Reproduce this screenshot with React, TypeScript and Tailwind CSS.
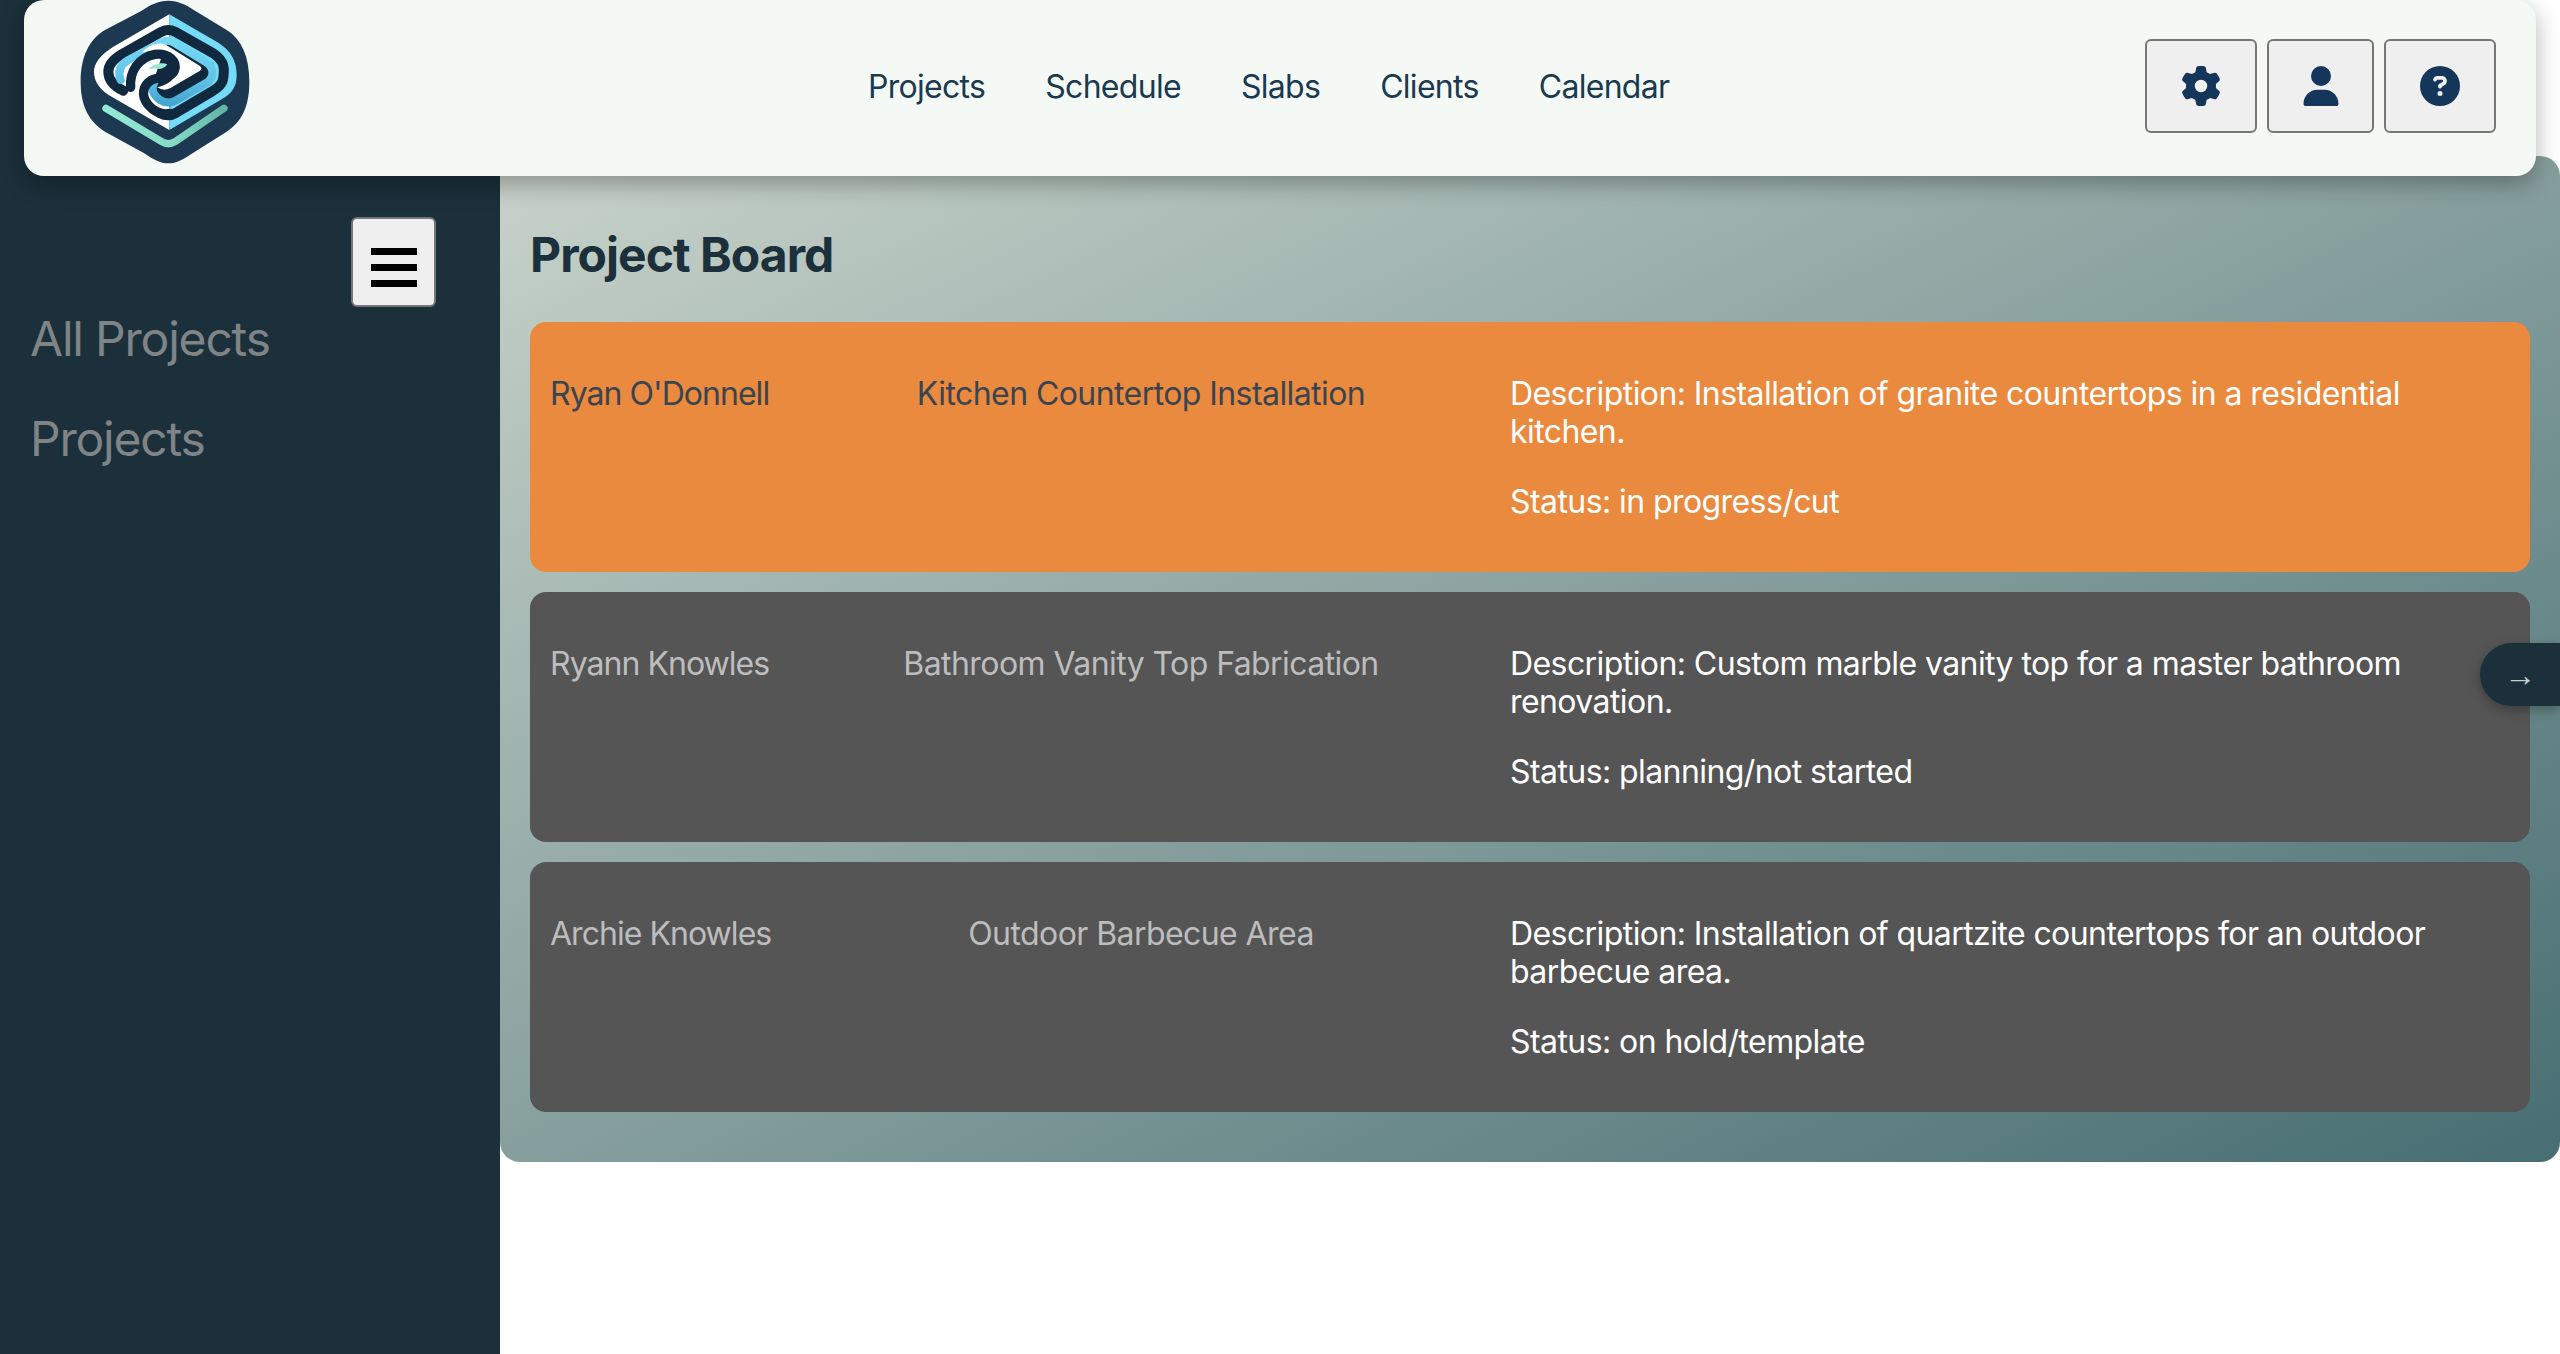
import { FaGear, FaUser, FaCircleQuestion } from 'react-icons/fa6'

const navLinks = ['Projects', 'Schedule', 'Slabs', 'Clients', 'Calendar']

const projects = [
  {
    client: "Ryan O'Donnell",
    title: 'Kitchen Countertop Installation',
    description: 'Description: Installation of granite countertops in a residential kitchen.',
    status: 'Status: in progress/cut',
    active: true,
  },
  {
    client: 'Ryann Knowles',
    title: 'Bathroom Vanity Top Fabrication',
    description: 'Description: Custom marble vanity top for a master bathroom renovation.',
    status: 'Status: planning/not started',
    active: false,
  },
  {
    client: 'Archie Knowles',
    title: 'Outdoor Barbecue Area',
    description: 'Description: Installation of quartzite countertops for an outdoor barbecue area.',
    status: 'Status: on hold/template',
    active: false,
  },
]

function Logo() {
  return (
    <svg viewBox="0 0 510 495" className="w-[170px] h-[165px]">
      <defs>
        <linearGradient id="mint" x1="0" y1="0" x2="1" y2="0">
          <stop offset="0" stopColor="#93e9d3" />
          <stop offset="0.55" stopColor="#86dcc8" />
          <stop offset="1" stopColor="#62b5a5" />
        </linearGradient>
        <linearGradient id="swirl" x1="0" y1="0" x2="0" y2="1">
          <stop offset="0" stopColor="#74d8f4" />
          <stop offset="0.6" stopColor="#62c4e8" />
          <stop offset="1" stopColor="#46a6d2" />
        </linearGradient>
      </defs>
      <path d="M265 2C295 2 320 15 345 32L440 90C485 118 508 170 508 245C508 320 485 365 440 395L340 458C310 478 290 490 265 490C240 490 220 478 190 458L75 395C28 365 2 320 2 245C2 170 28 118 75 90L185 32C210 15 235 2 265 2Z" fill="#1d3851" />
      <path d="M268 43L100 140C60 165 42 190 42 215C42 245 60 270 95 290L268 390Z" fill="#fff" />
      <path d="M268 43L415 128C450 150 470 180 470 225C470 262 455 280 425 298L268 390Z" fill="#74dcf6" />
      <path d="M130 272C95 255 85 235 85 215C85 195 100 178 125 163L245 95Q265 85 285 95L400 160C430 180 435 200 430 232C428 255 410 265 395 275L285 340Q265 352 240 340" fill="none" stroke="#10293f" strokeWidth="30" strokeLinecap="round" strokeLinejoin="round" />
      <path d="M265 110L400 190L400 240L270 320L225 290L225 230Z" fill="#10293f" />
      <path d="M122 240C112 215 120 195 145 180L245 127Q262 118 280 127L375 185C400 200 405 225 385 245L290 300Q265 315 240 300C220 285 212 270 222 250" fill="none" stroke="url(#swirl)" strokeWidth="24" strokeLinecap="round" strokeLinejoin="round" />
      <path d="M185 158C205 135 235 125 255 133L360 198Q368 205 360 212L270 265Q250 275 232 262C255 258 290 240 295 205C295 175 255 150 220 152C205 153 195 155 185 158Z" fill="#fff" />
      <path d="M152 262C148 215 175 172 225 163C265 158 295 185 283 212C272 235 240 228 215 240C190 255 180 285 205 315C225 338 250 345 272 340" fill="none" stroke="#10293f" strokeWidth="28" strokeLinecap="round" strokeLinejoin="round" />
      <path d="M205 208C220 192 245 185 262 193C258 200 250 205 240 207C228 205 215 205 205 208Z" fill="#9ae8d5" />
      <path d="M78 325L245 425Q265 437 285 425L432 325" fill="none" stroke="url(#mint)" strokeWidth="22" strokeLinecap="round" strokeLinejoin="round" />
    </svg>
  )
}

function IconButton({ children, width }: { children: React.ReactNode; width: string }) {
  return (
    <button className={`${width} h-[94px] flex items-center justify-center bg-[#efefef] border-2 border-[#767676] rounded-md text-[#14365a] text-[40px]`}>
      {children}
    </button>
  )
}

export default function App() {
  return (
    <div className="relative flex h-screen bg-white font-['Inter',sans-serif] overflow-hidden">
      <header className="absolute top-0 left-6 right-6 z-20 h-[176px] flex items-center justify-between bg-[#f5f9f6] rounded-[20px] shadow-[0_8px_24px_rgba(0,0,0,0.3)] pl-[56px] pr-10">
        <div className="-mt-[11px]">
          <Logo />
        </div>
        <nav className="absolute left-[844px] top-[68px] flex gap-[60px] text-[32px] leading-[38px] tracking-[-0.022em] text-[#1a3a50]">
          {navLinks.map((link) => (
            <a key={link}>{link}</a>
          ))}
        </nav>
        <div className="flex gap-2.5 -mt-1">
          <IconButton width="w-[112px]"><FaGear /></IconButton>
          <IconButton width="w-[107px]"><FaUser /></IconButton>
          <IconButton width="w-[112px]"><FaCircleQuestion /></IconButton>
        </div>
      </header>

      <aside className="w-[500px] shrink-0 bg-[#1b303b] pt-[217px] pl-[30px]">
        <div className="flex justify-end pr-[64px] mb-[3px]">
          <button className="w-[85px] h-[90px] flex flex-col items-center justify-center gap-[9px] pt-[10px] bg-[#efefef] border-2 border-[#767676] rounded-md">
            <span className="block w-[46px] h-[7px] bg-black" />
            <span className="block w-[46px] h-[7px] bg-black" />
            <span className="block w-[46px] h-[7px] bg-black" />
          </button>
        </div>
        <ul className="flex flex-col gap-[42px] text-[48px] leading-[58px] tracking-[-0.025em] text-[#7f8486]">
          <li>All Projects</li>
          <li>Projects</li>
        </ul>
      </aside>

      <main className="flex-1 self-start mt-[156px] h-[1006px] rounded-[20px] bg-linear-to-br from-[#c8d3ca] to-[#476e73] px-[30px] pt-[70px]">
        <h2 className="text-[48px] leading-[58px] font-bold tracking-[-0.02em] text-[#1b303b] mb-[38px]">Project Board</h2>
        <div className="flex flex-col gap-5">
          {projects.map((p) => (
            <div
              key={p.client}
              className={`grid grid-cols-[222px_738px_1000px] h-[250px] px-5 pt-[53px] rounded-2xl text-[32px] leading-[38px] tracking-[-0.018em] ${p.active ? 'bg-[#ea8a3e] text-[#3a4450]' : 'bg-[#555555] text-[#bdbdbd]'}`}
            >
              <div className="whitespace-nowrap tracking-[-0.03em]">{p.client}</div>
              <div className="text-center">{p.title}</div>
              <div className="text-white">
                <p>{p.description}</p>
                <p className="mt-8">{p.status}</p>
              </div>
            </div>
          ))}
        </div>
      </main>

      <button className="absolute right-0 top-[643px] z-10 w-[80px] h-[63px] rounded-l-[32px] bg-[#1b303b] text-[#c5cfd0] font-['Liberation_Sans',sans-serif] text-[32px] leading-none shadow-[0_4px_12px_rgba(0,0,0,0.3)]">
        →
      </button>
    </div>
  )
}
